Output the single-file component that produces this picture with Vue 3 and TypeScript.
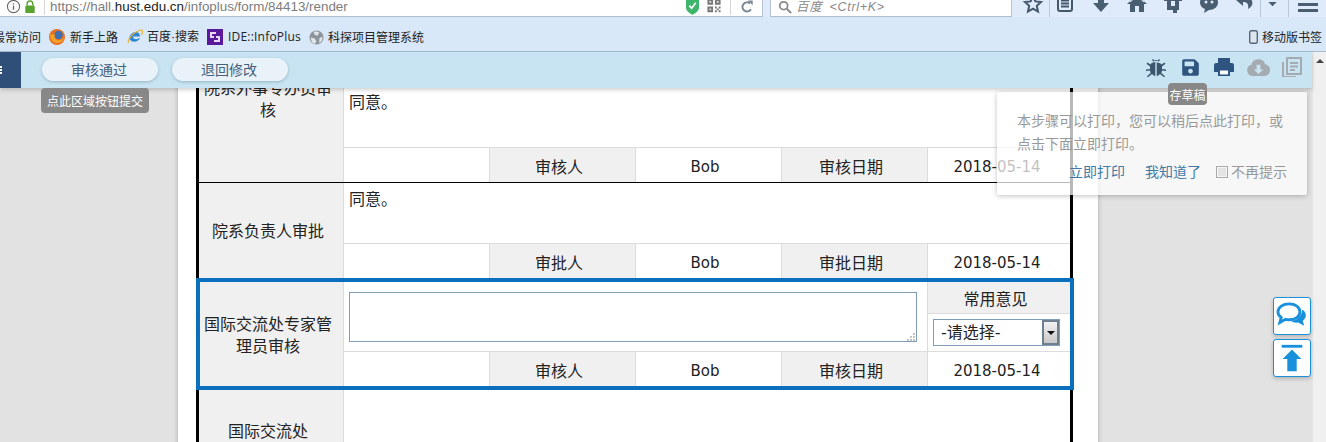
<script setup lang="ts">
interface Cell { text: string; head: boolean; latin: boolean }
function sign(role: string, date: string): Cell[] {
  return [
    { text: '', head: false, latin: false },
    { text: role, head: true, latin: false },
    { text: 'Bob', head: false, latin: true },
    { text: date, head: true, latin: false },
    { text: '2018-05-14', head: false, latin: true },
  ]
}
const auditRow = sign('审核人', '审核日期')
const approveRow = sign('审批人', '审批日期')
</script>

<template>
  <div class="screen">
    <header class="addr">
      <div class="addr-row">
        <div class="urlbox">
          <svg class="i-info" viewBox="0 0 16 16"><circle cx="8" cy="8" r="6.5" fill="none" stroke="#666" stroke-width="1.2"/><rect x="7.3" y="7" width="1.4" height="4.5" fill="#666"/><rect x="7.3" y="4.5" width="1.4" height="1.4" fill="#666"/></svg>
          <svg class="i-lock" viewBox="0 0 12 16"><path d="M3 7V5a3 3 0 0 1 6 0v2" fill="none" stroke="#5aa32e" stroke-width="1.6"/><rect x="1" y="7" width="10" height="8" rx="1" fill="#5aa32e"/></svg>
          <span class="url-sep"></span>
          <span class="url">https://hall.<b>hust.edu.cn</b>/infoplus/form/84413/render</span>
          <svg class="i-shield" viewBox="0 0 14 18"><path d="M0 1h14v9c0 4-4 6-7 8-3-2-7-4-7-8z" fill="#3db66b"/><path d="M3.5 8l2.6 2.8L10.5 5" fill="none" stroke="#fff" stroke-width="1.8"/></svg>
          <svg class="i-qr" viewBox="0 0 14 16"><path d="M0 0h6v6H0zM8 0h6v6H8zM0 8h6v6H0zM8 8h2v2H8zM12 8h2v2h-2zM10 10h2v2h-2zM8 12h2v2H8zM12 12h2v2h-2z" fill="#777"/><path d="M2 2h2v2H2zM10 2h2v2h-2zM2 10h2v2H2z" fill="#ddd"/></svg>
          <span class="url-sep sep-b"></span>
          <svg class="i-reload" viewBox="0 0 16 16"><path d="M12.5 10.5A5.2 5.2 0 1 1 11.5 4" fill="none" stroke="#7b8996" stroke-width="2.2"/><path d="M9 0.5h5.5V6z" fill="#7b8996"/></svg>
        </div>
        <div class="searchbox">
          <svg class="i-search" viewBox="0 0 16 16"><circle cx="6.5" cy="6.5" r="4.5" fill="none" stroke="#8a8a8a" stroke-width="2"/><path d="M10 10l5 5" stroke="#8a8a8a" stroke-width="2.4"/></svg>
          <span class="search-text">百度 &lt;Ctrl+K&gt;</span>
        </div>
        <div class="tools">
          <span class="slot s32"><svg viewBox="0 0 20 20" class="ti"><path d="M10 2l2.4 5.4 5.6.6-4.2 3.8 1.2 5.7L10 14.7l-5 2.8 1.2-5.7L2 8l5.6-.6z" fill="none" stroke="#44586b" stroke-width="2"/></svg></span>
          <span class="sep sep-star"></span>
          <span class="slot"><svg viewBox="0 0 20 20" class="ti"><rect x="3" y="2" width="14" height="15" rx="2" fill="none" stroke="#44586b" stroke-width="2"/><path d="M6 6.5h8M6 9.5h8M6 12.5h8" stroke="#44586b" stroke-width="1.8"/></svg></span>
          <span class="slot"><svg viewBox="0 0 20 20" class="ti"><path d="M7 0h6v9h5l-8 9-8-9h5z" fill="#4a5e72"/></svg></span>
          <span class="slot"><svg viewBox="0 0 20 20" class="ti"><path d="M10 1L0 10h3v8h5v-6h4v6h5v-8h3z" fill="#4a5e72"/><path d="M3 8l7-6 7 6" stroke="#e8f0fa" stroke-width="1" fill="none"/></svg></span>
          <span class="slot"><svg viewBox="0 0 20 20" class="ti"><path d="M4 0h4v4h6v-2h2v2h3v3h-3v9h-2v3h-4v-3H4V7H1V4h3zM8 7v5h4V7z" fill="#4a5e72"/></svg></span>
          <span class="slot"><svg viewBox="0 0 20 20" class="ti"><path d="M10 1c5 0 9 3 9 7.500S15 16 10 16l-5 3 1-4C3 14 1 11.500 1 8.500 1 4 5 1 10 1z" fill="#4a5e72"/><circle cx="7" cy="8" r="1.500" fill="#dbe8f7"/><circle cx="13" cy="8" r="1.500" fill="#dbe8f7"/></svg></span>
          <span class="slot"><svg viewBox="0 0 20 20" class="ti"><path d="M8 0L1 6l7 6V8c4 0 6 2 5 7 4-2 5-5 4-8-1-2.500-4-4-9-3.500z" fill="#4a5e72"/></svg></span>
          <span class="sep sep-undo"></span>
          <span class="slot s18"><svg viewBox="0 0 10 6" class="tc"><path d="M0 0h10L5 5z" fill="#4a5e72"/></svg></span>
          <span class="sep sep-menu"></span>
          <span class="slot s38"><svg viewBox="0 0 20 16" class="ti"><path d="M0 1h20v3H0zM0 7h20v3H0zM0 13h20v3H0z" fill="#4a5e72"/></svg></span>
        </div>
      </div>
    </header>

    <nav class="bookmarks">
      <span class="bm first">最常访问</span>
      <svg class="bi" viewBox="0 0 16 16"><circle cx="8" cy="8" r="8" fill="#e8701f"/><circle cx="9.5" cy="6" r="4.200" fill="#3f6fb5"/><path d="M1 5c0 6 3 9 7.500 9 3.500 0 6.500-3 6.500-6-1 2.500-4 3.500-6.500 3C6 10.500 5 8 6 5 4.500 6 2.500 6 1 5z" fill="#f2a22a"/></svg>
      <span class="bm b-firefox">新手上路</span>
      <svg class="bi" viewBox="0 0 16 16"><path d="M3 11C1 8 4 4 8 3c3-.5 5 1.500 5 4.500H6c0 3 4 3.500 6 1.500h1c-1 3-6 5-8.500 3z" fill="#2f86d0"/><path d="M1.500 14C0 11 6 3 14 1c2 0 2 2 .5 5" fill="none" stroke="#e5b23c" stroke-width="1.200"/></svg>
      <span class="bm b-baidu">百度·搜索</span>
      <svg class="bi" viewBox="0 0 16 16"><rect width="16" height="16" fill="#5b1a9c"/><path d="M3 3h6v2H5v2h2l0 2H3zM13 13H7v-2h4V9H9V7h4z" fill="#e8d8f5"/></svg>
      <span class="bm b-ide">IDE::InfoPlus</span>
      <svg class="bi bi-globe" viewBox="0 0 16 16"><circle cx="8" cy="8" r="7.500" fill="#8d9499"/><path d="M5 2c3-1 5 0 6 1L9 6 6 5zM2 8l4 1 2 3-2 3C3 14 2 11 2 8zM11 9l3-2c1 3-1 6-3 7z" fill="#dfe5ea"/></svg>
      <span class="bm b-last">科探项目管理系统</span>
      <svg class="bi-phone" viewBox="0 0 9 14"><rect x=".7" y=".7" width="7.600" height="12.600" rx="1.500" fill="#dce6ef" stroke="#55677a" stroke-width="1.400"/></svg>
      <span class="bm b-mobile">移动版书签</span>
    </nav>

    <div class="workarea">
      <div class="main">
        <div class="toolbar">
          <div class="navy"><i></i><i></i><i></i></div>
          <button class="pill first-pill" type="button">审核通过</button>
          <button class="pill" type="button">退回修改</button>
          <div class="actions">
            <span class="act"><svg viewBox="0 0 24 24" class="ai"><path d="M9 4l1.500 2h3L15 4l1 .8-1.300 2A3 3 0 0 0 12 5a3 3 0 0 0-2.700 1.800L8 4.800z" fill="#3d566f"/><path d="M12 7c-3 0-5 1-5.500 2.500l-3-2-1 1.200L6 11.500V14l-4 .5V16l4-.5c.1 1 .3 1.800.7 2.500L3 21.300l1 1L8 19c1 1 2.500 2 3.300 2V7.500zM12.700 7.500V21c1 0 2.300-1 3.300-2l4 3.300 1-1-3.700-3.300c.4-.7.600-1.500.7-2.500l4 .5v-1.500l-4-.5v-2.500l3.500-2.800-1-1.200-3 2C17 8.500 15.500 7.500 12.700 7.500z" fill="#3d566f"/></svg></span>
            <span class="act"><svg viewBox="0 0 448 512" class="as"><path d="M433.941 129.941l-83.882-83.882A48 48 0 0 0 316.118 32H48C21.49 32 0 53.49 0 80v352c0 26.51 21.49 48 48 48h352c26.51 0 48-21.49 48-48V163.882a48 48 0 0 0-14.059-33.941zM224 416c-35.346 0-64-28.654-64-64 0-35.346 28.654-64 64-64s64 28.654 64 64c0 35.346-28.654 64-64 64zm96-304.520V212c0 6.627-5.373 12-12 12H76c-6.627 0-12-5.373-12-12V108c0-6.627 5.373-12 12-12h228.520c3.183 0 6.235 1.264 8.485 3.515l3.480 3.480A11.996 11.996 0 0 1 320 111.480z" fill="#2f5480"/></svg></span>
            <span class="act"><svg viewBox="0 0 20 18" class="ap"><path d="M4 0h12v5H4z" fill="#2f5480"/><path d="M2 5h16a2 2 0 0 1 2 2v7h-4v-3H4v3H0V7a2 2 0 0 1 2-2z" fill="#2f5480"/><path d="M5.500 12h9v4.500h-9z" fill="#fff"/><path d="M4 11h12v7H4zM6 12.500v4h8v-4z" fill="#2f5480" fill-rule="evenodd"/></svg></span>
            <span class="act"><svg viewBox="0 0 24 18" class="ac"><path d="M6 18a6 6 0 0 1-1.500-11.800A7.500 7.500 0 0 1 19 5.500 6.300 6.300 0 0 1 18.500 18z" fill="#a4acb2"/><path d="M10 6h4v5h3l-5 5-5-5h3z" fill="#c8e3f1"/></svg></span>
            <span class="act"><svg viewBox="0 0 20 20" class="aq"><path d="M1 5v15h13" fill="none" stroke="#a4acb2" stroke-width="2"/><rect x="5" y="1" width="14" height="16" fill="none" stroke="#a4acb2" stroke-width="2"/><path d="M8 6h8M8 9.500h8M8 13h5" stroke="#a4acb2" stroke-width="2"/></svg></span>
          </div>
        </div>

        <div class="viewport">
          <div class="page">
            <div class="table">
              <section class="block block-one">
                <div class="label">院系外事专办员审核</div>
                <div class="opinion opinion-tall">同意。</div>
                <div v-for="(c, i) in auditRow" :key="i" class="cell" :class="{ head: c.head, latin: c.latin }">{{ c.text }}</div>
              </section>
              <section class="block block-two">
                <div class="label">院系负责人审批</div>
                <div class="opinion">同意。</div>
                <div v-for="(c, i) in approveRow" :key="i" class="cell" :class="{ head: c.head, latin: c.latin }">{{ c.text }}</div>
              </section>
              <section class="block block-active">
                <div class="label">国际交流处专家管理员审核</div>
                <div class="editor">
                  <textarea class="ta"></textarea>
                  <svg class="grip" viewBox="0 0 8 8"><path d="M6 0h2v2H6zM3 3h2v2H3zM6 3h2v2H6zM0 6h2v2H0zM3 6h2v2H3zM6 6h2v2H6z" fill="#c4c4c4"/></svg>
                </div>
                <div class="common">
                  <div class="common-head">常用意见</div>
                  <div class="fake-select">
                    <span class="fs-text">-请选择-</span>
                    <span class="fs-btn"></span>
                  </div>
                </div>
                <div v-for="(c, i) in auditRow" :key="i" class="cell" :class="{ head: c.head, latin: c.latin }">{{ c.text }}</div>
              </section>
              <section class="block block-last">
                <div class="label">国际交流处</div>
                <div class="opinion"></div>
              </section>
            </div>
          </div>
        </div>

        <div class="tip tip-submit">点此区域按钮提交</div>
        <div class="tip tip-save">存草稿</div>

        <aside class="popover">
          <p class="pop-text">本步骤可以打印，您可以稍后点此打印，或点击下面立即打印。</p>
          <div class="pop-actions">
            <a class="pop-link">立即打印</a>
            <a class="pop-link">我知道了</a>
            <label class="pop-check"><span class="box"></span>不再提示</label>
          </div>
        </aside>

        <div class="floats">
          <button class="fbtn" type="button">
            <svg viewBox="0 0 34 32" class="fi"><path d="M14 3c6.500 0 11.500 3.500 11.500 8.500S20.500 20 14 20c-1.500 0-3 0-4-.5L4 23l1.500-5.500C3 16 2 14 2 11.500 2 6.500 7.500 3 14 3z" fill="none" stroke="#1890dc" stroke-width="3"/><path d="M28 9c3 2 4.500 5 3.500 8-.5 1.500-1.500 3-3 4l1.500 5.500-6.500-3.500c-3 .5-6-.5-8-2 5 0 12-3 12.500-12z" fill="#1890dc"/></svg>
          </button>
          <button class="fbtn" type="button">
            <svg viewBox="0 0 34 32" class="fi"><rect x="6" y="2" width="22" height="3" fill="#1890dc"/><path d="M17 7l10 10h-5v13H12V17H7z" fill="#1890dc"/></svg>
          </button>
        </div>
      </div>
      <div class="scrollbar"><span class="sb-arrow"></span></div>
    </div>
  </div>
</template>

<style scoped>
.screen {
  width: 1326px;
  height: 442px;
  display: flex;
  flex-direction: column;
  overflow: hidden;
  font-family: "Noto Sans CJK SC", "Liberation Sans", sans-serif;
  color: #222;
}
.addr {
  height: 17px;
  flex: none;
  overflow: hidden;
  background: #dfeafa;
}
.addr-row {
  height: 12px;
  display: flex;
  align-items: center;
}
.urlbox {
  width: 763px;
  height: 20px;
  margin-top: -3px;
  align-self: flex-start;
  flex: none;
  box-sizing: border-box;
  display: flex;
  align-items: center;
  background: #fff;
  border-right: 1px solid #b4c4d4;
  border-bottom: 1px solid #aebfd0;
}
.i-info { width: 15px; height: 15px; margin-left: 6px; flex: none; }
.i-lock { width: 12px; height: 15px; margin-left: 3px; flex: none; }
.url-sep { width: 1px; height: 16px; background: #d5d5d5; margin-left: 8px; flex: none; }
.url {
  margin-left: 5px;
  font: 13.4px/16px "Liberation Sans", sans-serif;
  color: #7d7d7d;
  white-space: nowrap;
}
.url b { font-weight: 400; color: #222; }
.i-shield { width: 13px; height: 17px; margin-left: auto; flex: none; margin-right: -1px; }
.i-qr { width: 14px; height: 15px; margin-left: 9px; flex: none; }
.sep-b { margin-left: 9px; }
.i-reload { width: 14px; height: 14px; margin: 0 8px 0 9px; flex: none; }
.searchbox {
  width: 242px;
  height: 20px;
  margin-top: -3px;
  margin-left: 7px;
  align-self: flex-start;
  flex: none;
  box-sizing: border-box;
  display: flex;
  align-items: center;
  background: #fff;
  border-left: 1px solid #b4c4d4;
  border-right: 1px solid #b4c4d4;
  border-bottom: 1px solid #aebfd0;
}
.i-search { width: 14px; height: 14px; margin-left: 7px; flex: none; }
.search-text {
  margin-left: 4px;
  font: italic 12.500px/16px "Liberation Sans", "Noto Sans CJK SC", sans-serif;
  letter-spacing: .7px;
  word-spacing: 3px;
  color: #8a8a8a;
  white-space: nowrap;
}
.tools {
  margin-left: 5px;
  align-self: flex-start;
  height: 12px;
  margin-top: -2px;
  display: flex;
  align-items: center;
}
.slot {
  width: 36px;
  height: 12px;
  flex: none;
  display: flex;
  align-items: center;
  justify-content: center;
}
.s32 { width: 32px; }
.s18 { width: 18px; margin-right: 7px; }
.s38 { width: 38px; }
.ti { width: 20px; height: 20px; flex: none; overflow: visible; }
.tc { width: 9px; height: 5px; flex: none; }
.sep { width: 1px; height: 28px; flex: none; background: #b9c8d8; }
.sep-star { margin-right: -3px; }
.sep-undo { margin-left: -3px; margin-right: 2px; }
.bookmarks {
  height: 35px;
  flex: none;
  box-sizing: border-box;
  padding-top: 6px;
  display: flex;
  align-items: center;
  background: #d8e8f8;
  border-bottom: 1px solid #a7bbcf;
  font-size: 12px;
  white-space: nowrap;
}
.bm { color: #222; line-height: 16px; }
.first { margin-left: -7px; }
.bi { width: 16px; height: 16px; flex: none; }
.first + .bi { margin-left: 8px; }
.b-firefox { margin-left: 5px; margin-right: 9px; }
.b-baidu {
  margin-left: 4px;
  margin-right: 8px;
  font-family: "Liberation Sans", "Noto Sans CJK SC", sans-serif;
}
.b-ide { margin-left: 5px; margin-right: 10px; width: 71px; font-family: "Open Sans", sans-serif; font-size: 12px; letter-spacing: .2px; }
.bi-globe { width: 15px; height: 15px; }
.b-last { margin-left: 4px; }
.bi-phone { width: 9px; height: 14px; margin-left: auto; margin-right: 4px; flex: none; }
.b-mobile { margin-right: 4px; }
.workarea {
  flex: 1;
  min-height: 0;
  display: flex;
}
.main {
  flex: 1;
  min-width: 0;
  display: flex;
  flex-direction: column;
  position: relative;
}
.scrollbar {
  width: 14px;
  flex: none;
  background: #f0f0f0;
  border-left: 1px solid #e6e6e6;
  box-sizing: border-box;
  display: flex;
  justify-content: center;
  padding-top: 7px;
}
.sb-arrow {
  width: 0;
  height: 0;
  border-left: 4px solid transparent;
  border-right: 4px solid transparent;
  border-bottom: 4px solid #444;
}
.toolbar {
  height: 36px;
  flex: none;
  display: flex;
  align-items: center;
  background: #c8e3f1;
  box-shadow: 0 2px 4px rgba(0, 0, 0, .18);
  position: relative;
  z-index: 3;
}
.navy {
  width: 21px;
  height: 100%;
  background: #2f4f79;
  display: flex;
  flex-direction: column;
  justify-content: center;
  gap: 1px;
}
.navy i { display: block; width: 2px; height: 2px; background: #fff; }
.pill {
  width: 116px;
  height: 23px;
  margin-left: 14px;
  border: 0;
  border-radius: 12px;
  background: #e9f2f9;
  box-shadow: 0 1px 3px rgba(60, 90, 120, .35);
  color: #44607a;
  font: 14px/23px "Noto Sans CJK SC", sans-serif;
  padding: 0 2px 0 0;
  margin-top: -1px;
}
.first-pill { margin-left: 21px; }
.actions {
  margin-left: auto;
  margin-right: 3px;
  display: flex;
  align-items: center;
  margin-top: -6px;
}
.act {
  width: 34px;
  height: 24px;
  display: flex;
  align-items: center;
  justify-content: center;
}
.ai { width: 24px; height: 24px; }
.as { width: 17px; height: 19px; }
.ap { width: 20px; height: 18px; }
.ac { width: 23px; height: 17px; }
.aq { width: 20px; height: 20px; }
.viewport {
  flex: 1;
  min-height: 0;
  overflow: hidden;
  background: #e2e2e2;
  padding-left: 178px;
}
.page {
  width: 920px;
  min-height: 100%;
  background: #fff;
  box-shadow: 0 0 5px rgba(0, 0, 0, .25);
  padding-left: 18px;
  box-sizing: border-box;
}
.table {
  width: 877px;
  box-sizing: border-box;
  margin-top: -72px;
  border-left: 3px solid #000;
  border-right: 3px solid #000;
  font-size: 16px;
  line-height: 22px;
}
.block {
  display: grid;
  grid-template-columns: 145px repeat(4, 146px) 1fr;
  box-sizing: border-box;
}
.block-one {
  grid-template-rows: 132px 34px;
  border-bottom: 1px solid #000;
}
.block-two {
  grid-template-rows: 61px 35px;
  margin-bottom: -1px;
}
.block-active {
  grid-template-columns: 144px repeat(4, 146px) 1fr;
  grid-template-rows: 70px 34px;
  margin: 0 -4px 0 -3px;
  border: 4px solid #0a6fbd;
  position: relative;
  z-index: 1;
}
.block-last { grid-template-rows: 82px; }
.label {
  grid-row: 1 / -1;
  background: #f0f0f0;
  border-right: 1px solid #dcdcdc;
  padding: 0 6px 2px 0;
  display: flex;
  align-items: center;
  justify-content: center;
  text-align: center;
}
.block-active .label { padding: 0 7px 0 0; }
.opinion {
  grid-column: 2 / -1;
  padding: 4px 0 0 5px;
  border-bottom: 1px solid #dcdcdc;
}
.block-last .opinion { border-bottom: 0; }
.opinion-tall { padding-top: 74px; }
.cell {
  border-right: 1px solid #dcdcdc;
  padding-right: 7px;
  display: flex;
  align-items: center;
  justify-content: center;
}
.block-one .cell, .block-active .cell { padding-top: 1px; }
.cell:last-child { border-right: 0; padding-right: 4px; }
.head { background: #f0f0f0; }
.latin { font: 15px/22px "DejaVu Sans", sans-serif; padding-top: 2px; }
.block-one .latin, .block-active .latin { padding-top: 3px; }
.editor {
  grid-column: 2 / 6;
  border-right: 1px solid #dcdcdc;
  border-bottom: 1px solid #dcdcdc;
  padding: 10px 0 0 5px;
  position: relative;
}
.ta {
  display: block;
  width: 568px;
  height: 50px;
  box-sizing: border-box;
  border: 1px solid #7f9db9;
  border-radius: 0;
  outline: 0;
  margin: 0;
  padding: 2px;
  resize: none;
}
.grip {
  position: absolute;
  left: 563px;
  top: 51px;
  width: 8px;
  height: 8px;
}
.common {
  border-bottom: 1px solid #dcdcdc;
}
.common-head {
  height: 32px;
  box-sizing: border-box;
  background: #f0f0f0;
  border-bottom: 1px solid #dcdcdc;
  padding-right: 7px;
  display: flex;
  align-items: center;
  justify-content: center;
}
.fake-select {
  width: 127px;
  height: 27px;
  box-sizing: border-box;
  margin: 5px 0 0 5px;
  border: 1px solid #7f9db9;
  display: flex;
  align-items: center;
  justify-content: space-between;
}
.fs-text { margin-left: 7px; font-family: "DejaVu Sans", "Noto Sans CJK SC", sans-serif; }
.fs-btn {
  width: 17px;
  height: 25px;
  box-sizing: border-box;
  border: 2px solid #6e7f90;
  background: linear-gradient(#f2f2f2, #c8c8c8);
  position: relative;
}
.fs-btn::after {
  content: "";
  position: absolute;
  left: 3px;
  top: 9px;
  border-left: 4px solid transparent;
  border-right: 4px solid transparent;
  border-top: 4px solid #111;
}
.tip {
  position: absolute;
  z-index: 5;
  background: #888;
  color: #fff;
  font-size: 12px;
  border-radius: 4px;
  display: flex;
  align-items: center;
  justify-content: center;
  white-space: nowrap;
}
.tip-submit { left: 41px; top: 36px; width: 108px; height: 25px; }
.tip-save { left: 1168px; top: 31px; width: 39px; height: 22px; }
.popover {
  position: absolute;
  z-index: 4;
  left: 997px;
  top: 40px;
  width: 310px;
  height: 103px;
  box-sizing: border-box;
  padding: 17px 20px 0;
  background: rgba(255, 255, 255, .72);
  border-radius: 2px;
  box-shadow: 0 1px 5px rgba(0, 0, 0, .25);
  font-size: 14px;
  line-height: 23px;
  color: #999;
}
.pop-text { margin: 0; }
.pop-actions {
  margin-top: 5px;
  display: flex;
  justify-content: flex-end;
  align-items: center;
  gap: 20px;
}
.pop-link { color: #3f7ba6; }
.pop-check {
  display: flex;
  align-items: center;
  margin-left: -5px;
}
.box {
  width: 12px;
  height: 12px;
  box-sizing: border-box;
  border: 1px solid #aaa;
  background: #e4e4e4;
  box-shadow: inset 0 0 0 1px #f5f5f5;
  margin-right: 3px;
}
.floats {
  position: absolute;
  z-index: 2;
  left: 1273px;
  top: 245px;
  display: flex;
  flex-direction: column;
  gap: 4px;
}
.fbtn {
  width: 38px;
  height: 38px;
  padding: 0;
  box-sizing: border-box;
  border: 1px solid #1a90d9;
  border-radius: 3px;
  background: #fff;
  box-shadow: 0 2px 4px rgba(0, 0, 0, .2);
  display: flex;
  align-items: center;
  justify-content: center;
}
.fi { width: 32px; height: 30px; }
</style>

<style>
html, body { margin: 0; overflow: hidden; }
</style>
